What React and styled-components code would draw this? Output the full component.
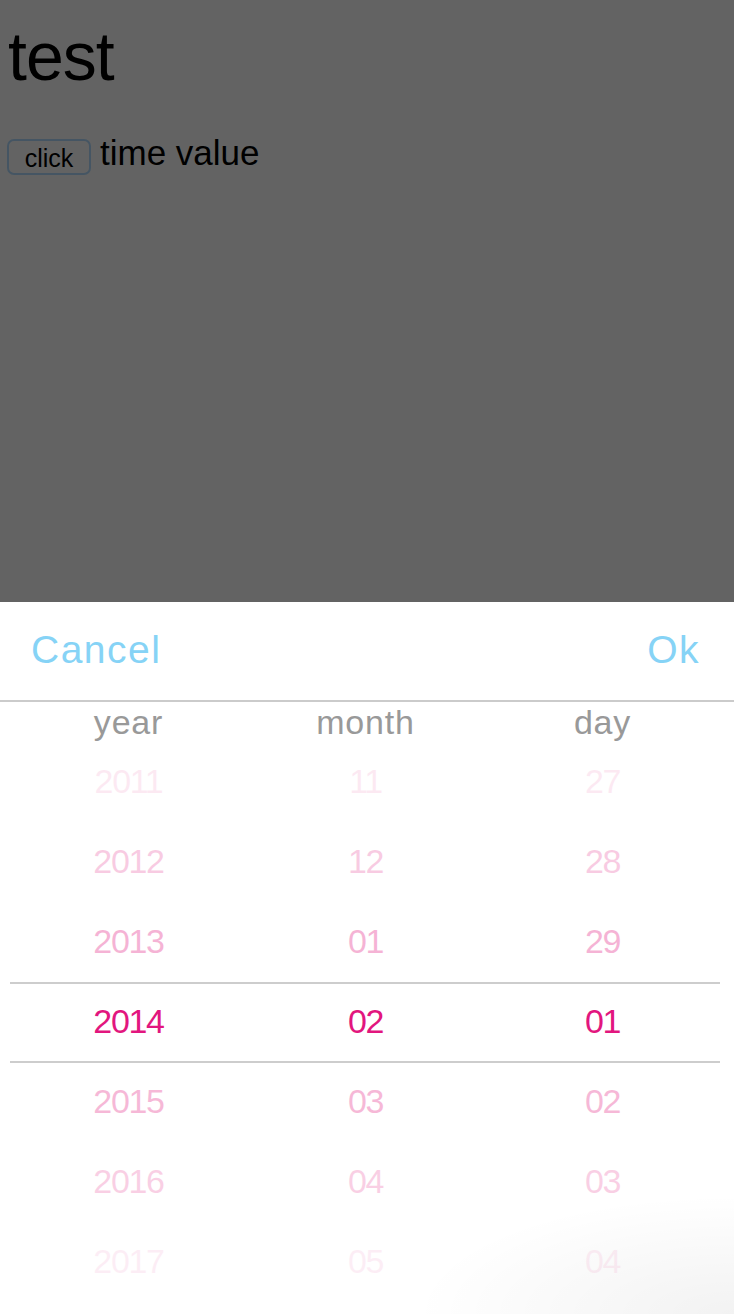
import React from "react";
import styled, { createGlobalStyle } from "styled-components";

const Global = createGlobalStyle`
  html, body { margin: 0; padding: 0; background: #ffffff; }
  body { font-family: "Liberation Sans", Arial, sans-serif; overflow: hidden; }
`;

const Page = styled.div`
  padding: 8px;
  min-height: 1314px;
  box-sizing: border-box;
`;

const Title = styled.h1`
  margin: 8px 0 0;
  font-size: 68px;
  font-weight: 400;
  line-height: 80px;
  letter-spacing: -1px;
  color: #000;
`;

const Line = styled.div`
  display: flex;
  align-items: center;
  gap: 9px;
  margin-top: 43px;
`;

const Button = styled.button`
  width: 84px;
  height: 36px;
  margin-left: -1px;
  border: 2px solid rgb(178, 220, 255);
  border-radius: 7px;
  background: #ffffff;
  font-family: "Liberation Sans", Arial, sans-serif;
  font-size: 25px;
  color: #000;
  padding: 2px 0 0;
`;

const Value = styled.span`
  font-size: 35px;
  color: #000;
  margin-top: -8px;
`;

const Mask = styled.div`
  position: fixed;
  inset: 0;
  background: rgba(0, 0, 0, 0.612);
`;

const Sheet = styled.div`
  position: fixed;
  left: 0;
  right: 0;
  bottom: 0;
  height: 712px;
  background: #fff radial-gradient(ellipse 320px 120px at 100% 100%, rgba(0,0,0,0.05), rgba(0,0,0,0) 100%);
  display: flex;
  flex-direction: column;
`;

const Header = styled.div`
  height: 98px;
  border-bottom: 2px solid #cbcbcb;
  display: flex;
  align-items: center;
  justify-content: space-between;
  padding: 0 34px 0 31px;
`;

const Action = styled.span`
  font-size: 39px;
  letter-spacing: 1.5px;
  color: #86d3f6;
  margin-top: -2px;
`;

const Columns = styled.div`
  position: relative;
  display: grid;
  grid-template-columns: repeat(3, 237px);
  padding: 0 10px;
`;

const Column = styled.div`
  display: flex;
  flex-direction: column;
  align-items: center;
`;

const Label = styled.div`
  height: 40px;
  line-height: 40px;
  font-size: 34px;
  letter-spacing: 0.8px;
  color: #999999;
`;

const Cell = styled.div`
  height: 80px;
  line-height: 78px;
  font-size: 34px;
  letter-spacing: -1.3px;
  color: #e2167e;
`;

const Band = styled.div`
  position: absolute;
  left: 10px;
  right: 14px;
  top: 280px;
  height: 77px;
  border-top: 2px solid #cdcdcd;
  border-bottom: 2px solid #cdcdcd;
  pointer-events: none;
`;

const opacities = [0.09, 0.22, 0.32, 1, 0.3, 0.2, 0.07];

const data = [
  { label: "year", items: ["2011", "2012", "2013", "2014", "2015", "2016", "2017"] },
  { label: "month", items: ["11", "12", "01", "02", "03", "04", "05"] },
  { label: "day", items: ["27", "28", "29", "01", "02", "03", "04"] },
];

export default function App() {
  return (
    <>
      <Global />
      <Page>
        <Title>test</Title>
        <Line>
          <Button>click</Button>
          <Value>time value</Value>
        </Line>
      </Page>
      <Mask />
      <Sheet>
        <Header>
          <Action>Cancel</Action>
          <Action>Ok</Action>
        </Header>
        <Columns>
          {data.map((col) => (
            <Column key={col.label}>
              <Label>{col.label}</Label>
              {col.items.map((it, i) => (
                <Cell key={it + i} style={{ opacity: opacities[i] }}>
                  {it}
                </Cell>
              ))}
            </Column>
          ))}
          <Band />
        </Columns>
      </Sheet>
    </>
  );
}
